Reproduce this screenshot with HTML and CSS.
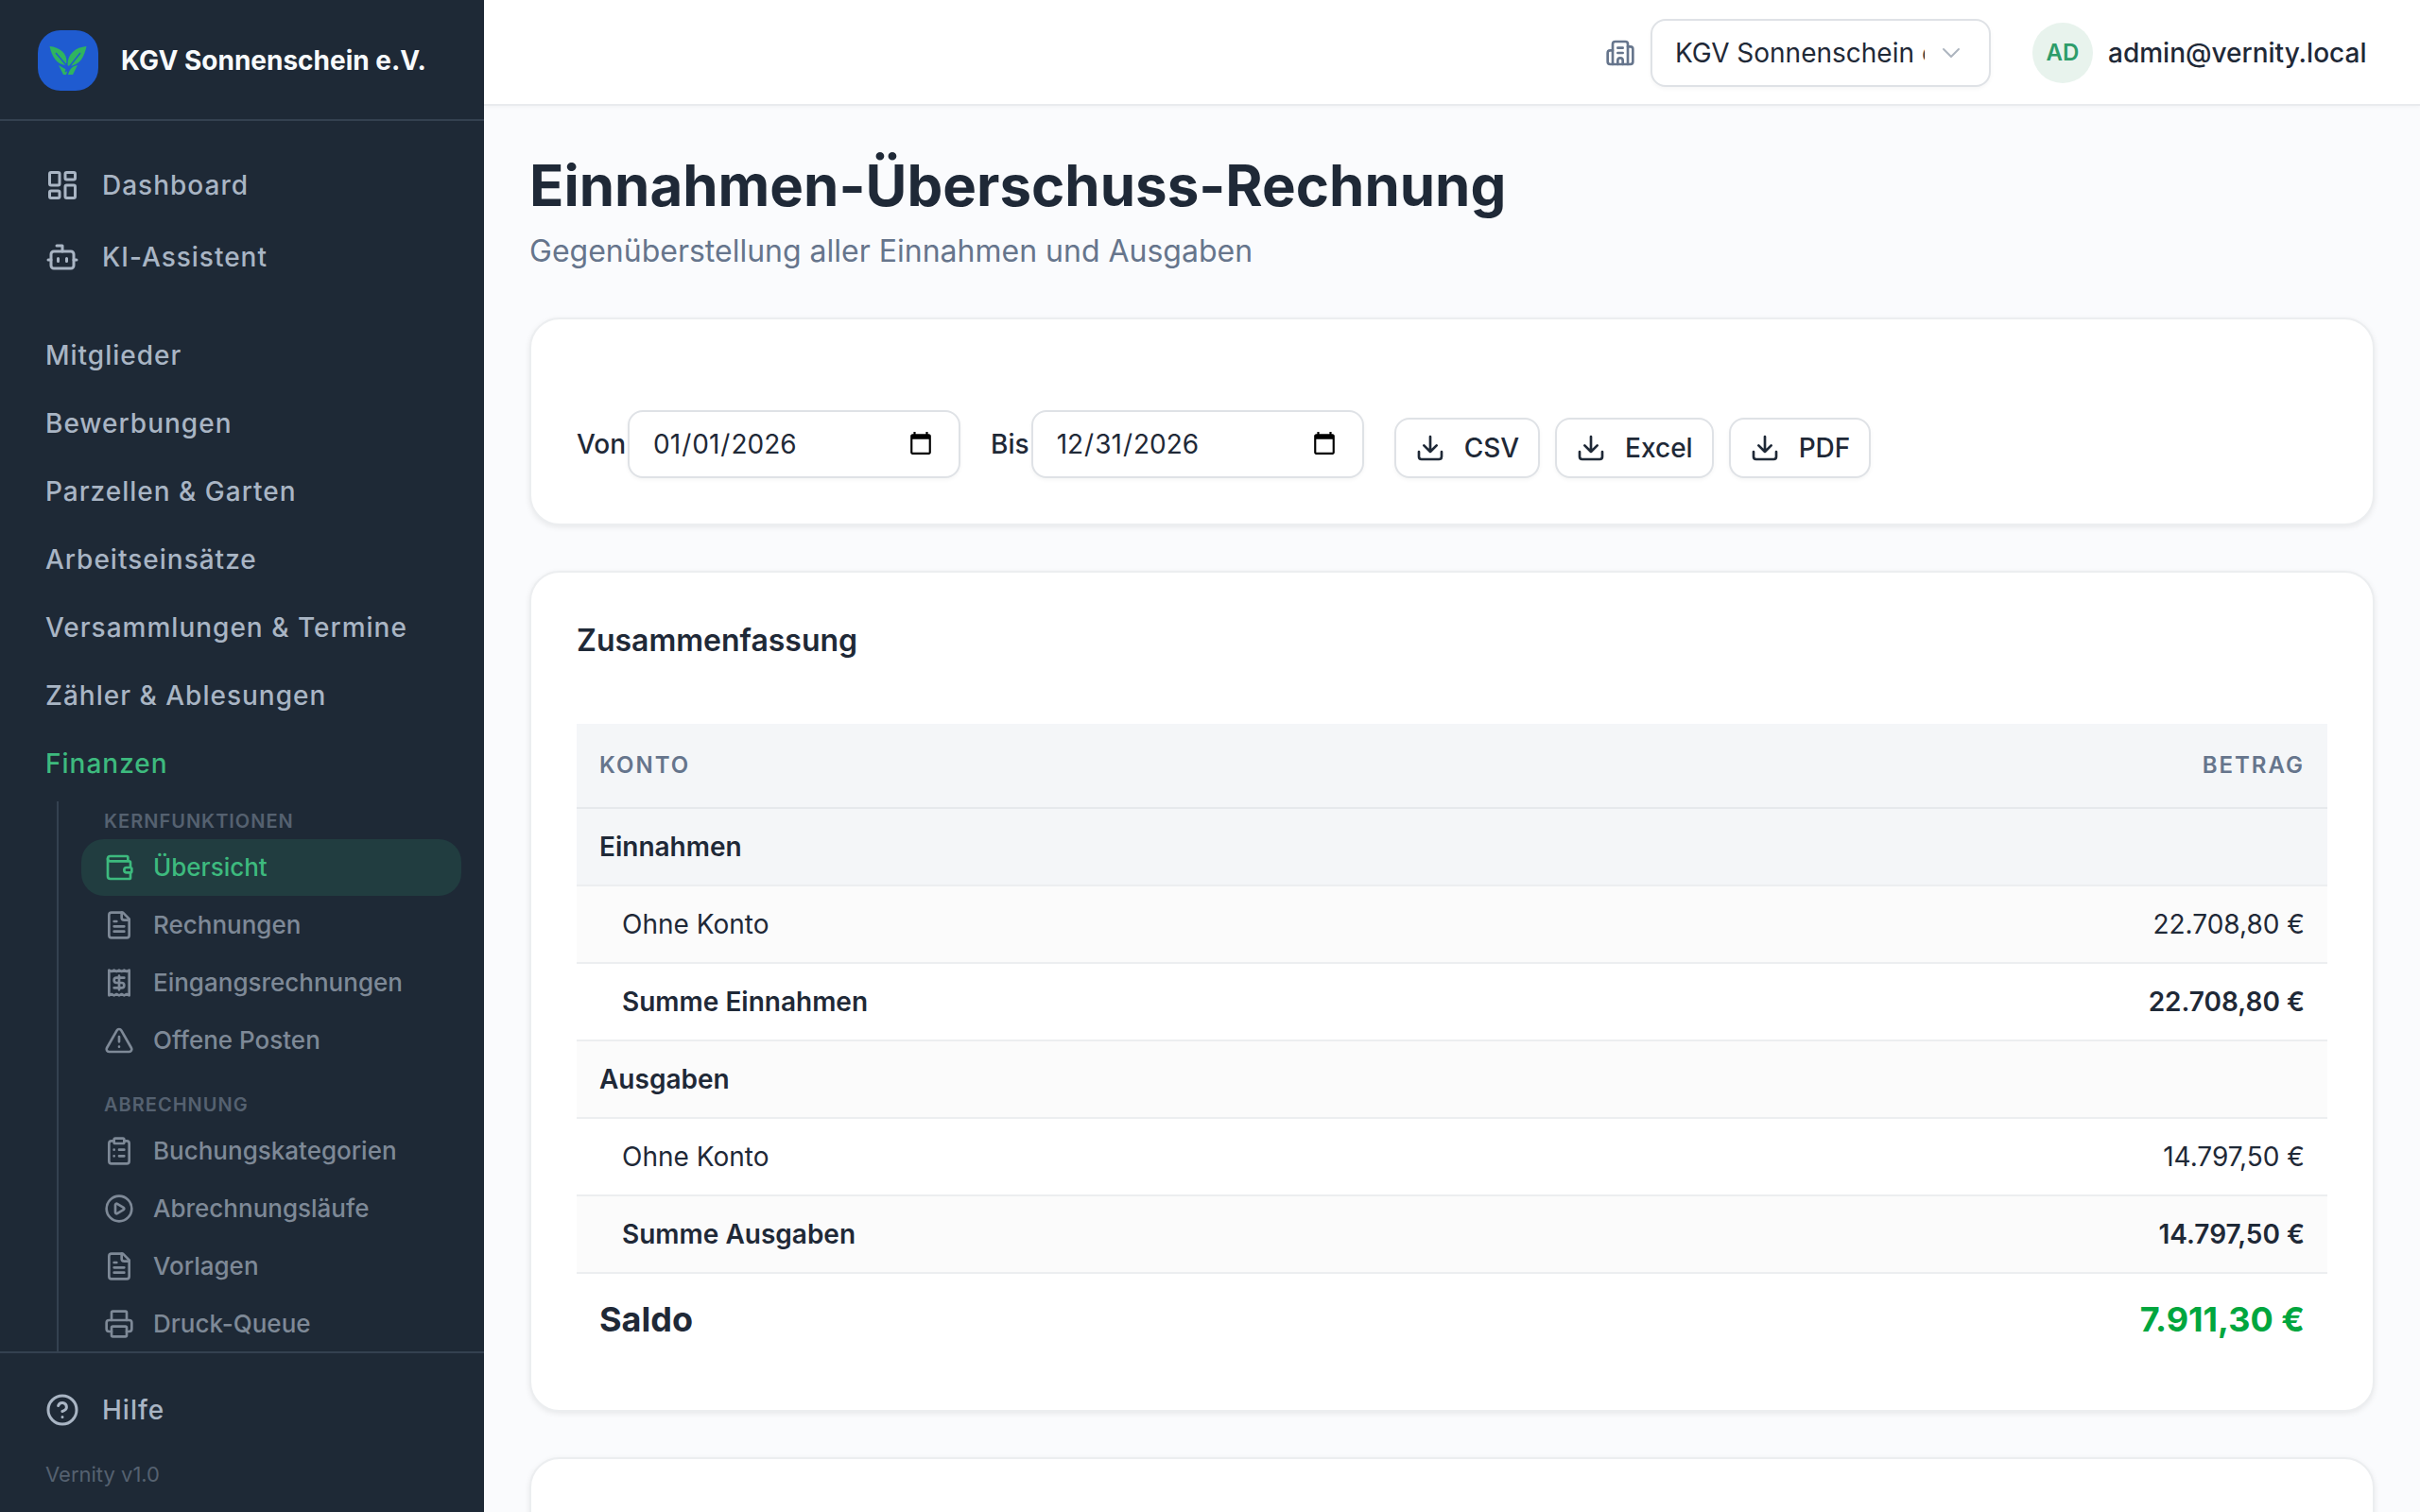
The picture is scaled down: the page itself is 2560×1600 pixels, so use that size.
FILE: index.html
```
<!DOCTYPE html>
<html lang="de">
<head>
  <meta charset="UTF-8" />
  <meta name="viewport" content="width=device-width, initial-scale=1" />
  <title>Einnahmen-Überschuss-Rechnung</title>
  <link rel="stylesheet" href="styles.css">
</head>
<body>

  <!-- Icon sprite -->
  <svg class="sprite" aria-hidden="true">
    <symbol id="i-dashboard" viewBox="0 0 24 24"><rect x="3" y="3" width="7" height="9" rx="1"/><rect x="14" y="3" width="7" height="5" rx="1"/><rect x="14" y="12" width="7" height="9" rx="1"/><rect x="3" y="16" width="7" height="5" rx="1"/></symbol>
    <symbol id="i-bot" viewBox="0 0 24 24"><path d="M12 8V4H8"/><rect x="4" y="8" width="16" height="12" rx="2"/><path d="M2 14h2M20 14h2M15 13v2M9 13v2"/></symbol>
    <symbol id="i-wallet" viewBox="0 0 24 24"><path d="M19 7V4a1 1 0 0 0-1-1H5a2 2 0 0 0 0 4h15a1 1 0 0 1 1 1v4h-3a2 2 0 0 0 0 4h3a1 1 0 0 0 1-1v-2a1 1 0 0 0-1-1"/><path d="M3 5v14a2 2 0 0 0 2 2h15a1 1 0 0 0 1-1v-4"/></symbol>
    <symbol id="i-file" viewBox="0 0 24 24"><path d="M15 2H6a2 2 0 0 0-2 2v16a2 2 0 0 0 2 2h12a2 2 0 0 0 2-2V7Z"/><path d="M14 2v4a2 2 0 0 0 2 2h4M10 9H8M16 13H8M16 17H8"/></symbol>
    <symbol id="i-receipt" viewBox="0 0 24 24"><path d="M4 2v20l2-1 2 1 2-1 2 1 2-1 2 1 2-1 2 1V2l-2 1-2-1-2 1-2-1-2 1-2-1-2 1Z"/><path d="M16 8h-6a2 2 0 1 0 0 4h4a2 2 0 1 1 0 4H8M12 17.5v-11"/></symbol>
    <symbol id="i-alert" viewBox="0 0 24 24"><path d="m21.73 18-8-14a2 2 0 0 0-3.48 0l-8 14A2 2 0 0 0 4 21h16a2 2 0 0 0 1.730-3M12 9v4M12 17h.01"/></symbol>
    <symbol id="i-clipboard" viewBox="0 0 24 24"><rect x="8" y="2" width="8" height="4" rx="1"/><path d="M16 4h2a2 2 0 0 1 2 2v14a2 2 0 0 1-2 2H6a2 2 0 0 1-2-2V6a2 2 0 0 1 2-2h2M12 11h4M12 16h4M8 11h.01M8 16h.01"/></symbol>
    <symbol id="i-play" viewBox="0 0 24 24"><circle cx="12" cy="12" r="10"/><path d="M9 9a1 1 0 0 1 1.5-.86l5 3a1 1 0 0 1 0 1.720l-5 3A1 1 0 0 1 9 15Z"/></symbol>
    <symbol id="i-printer" viewBox="0 0 24 24"><path d="M6 18H4a2 2 0 0 1-2-2v-5a2 2 0 0 1 2-2h16a2 2 0 0 1 2 2v5a2 2 0 0 1-2 2h-2"/><path d="M6 9V3a1 1 0 0 1 1-1h10a1 1 0 0 1 1 1v6"/><rect x="6" y="14" width="12" height="8" rx="1"/></symbol>
    <symbol id="i-help" viewBox="0 0 24 24"><circle cx="12" cy="12" r="10"/><path d="M9.09 9a3 3 0 0 1 5.83 1c0 2-3 3-3 3M12 17h.01"/></symbol>
    <symbol id="i-building" viewBox="0 0 24 24"><path d="M10 12h4M10 8h4M14 21v-3a2 2 0 0 0-4 0v3"/><path d="M6 10H4a2 2 0 0 0-2 2v7a2 2 0 0 0 2 2h16a2 2 0 0 0 2-2V9a2 2 0 0 0-2-2h-2"/><path d="M6 21V5a2 2 0 0 1 2-2h8a2 2 0 0 1 2 2v16"/></symbol>
    <symbol id="i-download" viewBox="0 0 24 24"><path d="M12 15V3M21 15v4a2 2 0 0 1-2 2H5a2 2 0 0 1-2-2v-4M7 10l5 5 5-5"/></symbol>
    <symbol id="i-chevron" viewBox="0 0 24 24"><path d="m4 8 8 8 8-8"/></symbol>
  </svg>

  <div class="layout">
    <aside class="sidebar">
      <div class="brand">
        <svg class="logo" viewBox="0 0 64 64" aria-hidden="true">
          <rect width="64" height="64" rx="24" fill="#1f5bd0"/>
          <g fill="#2fb45f">
            <path d="M12.500 17C23 18 31 24 30.500 34L29 37C20 36 15 28 12.500 17Z"/>
            <path d="M51.500 17C40 18 31 25 31.500 37L33 38C45 37 49 28 51.500 17Z"/>
            <path d="M22 37L29 41 31 44 30 47H27Z"/>
            <path d="M42 37C37 38 34 40 32 47H37Z"/>
          </g>
          <path d="M19 24L31 38M45 24L29 44" fill="none" stroke="#1f5bd0" stroke-width="1.5"/>
        </svg>
        <span class="brand-name">KGV Sonnenschein e.V.</span>
      </div>

      <nav class="nav">
        <a class="nav-link" href="#"><svg class="icon icon-lg"><use href="#i-dashboard"/></svg>Dashboard</a>
        <a class="nav-link" href="#"><svg class="icon icon-lg"><use href="#i-bot"/></svg>KI-Assistent</a>

        <div class="nav-groups">
          <a class="nav-group" href="#">Mitglieder</a>
          <a class="nav-group" href="#">Bewerbungen</a>
          <a class="nav-group" href="#">Parzellen &amp; Garten</a>
          <a class="nav-group" href="#">Arbeitseinsätze</a>
          <a class="nav-group" href="#">Versammlungen &amp; Termine</a>
          <a class="nav-group" href="#">Zähler &amp; Ablesungen</a>
          <a class="nav-group active" href="#">Finanzen</a>
        </div>

        <div class="subnav">
          <div class="subnav-title">Kernfunktionen</div>
          <a class="subnav-link active" href="#"><svg class="icon"><use href="#i-wallet"/></svg>Übersicht</a>
          <a class="subnav-link" href="#"><svg class="icon"><use href="#i-file"/></svg>Rechnungen</a>
          <a class="subnav-link" href="#"><svg class="icon"><use href="#i-receipt"/></svg>Eingangsrechnungen</a>
          <a class="subnav-link" href="#"><svg class="icon"><use href="#i-alert"/></svg>Offene Posten</a>
          <div class="subnav-title">Abrechnung</div>
          <a class="subnav-link" href="#"><svg class="icon"><use href="#i-clipboard"/></svg>Buchungskategorien</a>
          <a class="subnav-link" href="#"><svg class="icon"><use href="#i-play"/></svg>Abrechnungsläufe</a>
          <a class="subnav-link" href="#"><svg class="icon"><use href="#i-file"/></svg>Vorlagen</a>
          <a class="subnav-link" href="#"><svg class="icon"><use href="#i-printer"/></svg>Druck-Queue</a>
        </div>
      </nav>

      <div class="sidebar-footer">
        <a class="nav-link help" href="#"><svg class="icon icon-lg"><use href="#i-help"/></svg>Hilfe</a>
        <div class="version">Vernity v1.0</div>
      </div>
    </aside>

    <div class="page">
      <header class="topbar">
        <div class="tenant">
          <svg class="icon"><use href="#i-building"/></svg>
          <div class="select-wrap">
            <select class="field" aria-label="Verein">
              <option>KGV Sonnenschein e.V.</option>
            </select>
            <svg class="icon chevron"><use href="#i-chevron"/></svg>
          </div>
        </div>
        <div class="user">
          <span class="avatar">AD</span>
          <span>admin@vernity.local</span>
        </div>
      </header>

      <main class="content">
        <div class="page-head">
          <h1>Einnahmen-Überschuss-Rechnung</h1>
          <p>Gegenüberstellung aller Einnahmen und Ausgaben</p>
        </div>

        <section class="card filter-card">
          <form class="filters">
            <div class="date">
              <label for="from">Von</label>
              <input class="field" type="date" id="from" value="2026-01-01">
            </div>
            <div class="date">
              <label for="to">Bis</label>
              <input class="field" type="date" id="to" value="2026-12-31">
            </div>
            <div class="exports">
              <button class="btn" type="button"><svg class="icon"><use href="#i-download"/></svg>CSV</button>
              <button class="btn" type="button"><svg class="icon"><use href="#i-download"/></svg>Excel</button>
              <button class="btn" type="button"><svg class="icon"><use href="#i-download"/></svg>PDF</button>
            </div>
          </form>
        </section>

        <section class="card">
          <h2>Zusammenfassung</h2>
          <table>
            <thead>
              <tr><th>Konto</th><th class="amount">Betrag</th></tr>
            </thead>
            <tbody>
              <tr class="section hovered"><td>Einnahmen</td><td></td></tr>
              <tr class="entry"><td>Ohne Konto</td><td class="amount">22.708,80 €</td></tr>
              <tr class="entry sum"><td>Summe Einnahmen</td><td class="amount">22.708,80 €</td></tr>
              <tr class="section"><td>Ausgaben</td><td></td></tr>
              <tr class="entry"><td>Ohne Konto</td><td class="amount">14.797,50 €</td></tr>
              <tr class="entry sum"><td>Summe Ausgaben</td><td class="amount">14.797,50 €</td></tr>
            </tbody>
            <tfoot>
              <tr><td>Saldo</td><td class="amount positive">7.911,30 €</td></tr>
            </tfoot>
          </table>
        </section>

        <section class="card next-card"></section>
      </main>
    </div>
  </div>

</body>
</html>
```
FILE: styles.css
```
* {
  box-sizing: border-box;
}
body {
  margin: 0;
  font-family: Inter, sans-serif;
  font-size: 28px;
  line-height: 40px;
  font-optical-sizing: none;
  color: #1f2937;
  background: #fafbfd;
}
a {
  color: inherit;
  text-decoration: none;
}
.sprite {
  display: none;
}
.icon {
  width: 32px;
  height: 32px;
  flex: none;
  fill: none;
  stroke: currentColor;
  stroke-width: 2;
  stroke-linecap: round;
  stroke-linejoin: round;
}
.icon-lg {
  width: 36px;
  height: 36px;
}
.layout {
  display: flex;
  height: 100vh;
  overflow: hidden;
}

/* Sidebar */
.sidebar {
  display: flex;
  flex-direction: column;
  flex: none;
  width: 512px;
  color: #a9b5c4;
  background: #1e2936;
}
.brand {
  display: flex;
  align-items: center;
  gap: 24px;
  padding: 32px 40px 30px;
  border-bottom: 2px solid #344150;
}
.logo {
  width: 64px;
  height: 64px;
  flex: none;
}
.brand-name {
  color: #f8fafc;
  font-weight: 700;
  white-space: nowrap;
}
.nav {
  flex: 1;
  min-height: 0;
  padding-top: 32px;
  overflow: hidden;
  font-weight: 500;
}
.nav-link {
  display: flex;
  align-items: center;
  gap: 24px;
  height: 72px;
  margin-bottom: 4px;
  padding: 0 48px;
  letter-spacing: 1px;
}
.nav-groups {
  padding-top: 28px;
}
.nav-group {
  display: block;
  padding: 16px 48px;
  letter-spacing: 1px;
}
.nav-group.active {
  color: #3dba7e;
}
.subnav {
  display: flex;
  flex-direction: column;
  gap: 1px;
  margin: 4px 24px 0 60px;
  padding-left: 24px;
  border-left: 2px solid #344150;
  color: #7e8997;
}
.subnav-title {
  padding: 9px 24px 6px;
  color: #556170;
  font-size: 20px;
  line-height: 24px;
  font-weight: 600;
  letter-spacing: 1px;
  text-transform: uppercase;
}
.subnav-link + .subnav-title {
  margin-top: 16px;
}
.subnav-link {
  display: flex;
  align-items: center;
  gap: 20px;
  height: 60px;
  flex: none;
  padding: 0 24px;
  border-radius: 24px;
  font-size: 26px;
}
.subnav-link.active {
  color: #3dba7e;
  background: #213d40;
}
.sidebar-footer {
  padding: 24px 0;
  border-top: 2px solid #344150;
}
.help {
  font-weight: 500;
}
.version {
  padding: 12px 48px 0;
  color: #556170;
  font-size: 22px;
  line-height: 32px;
}

/* Top bar */
.page {
  flex: 1;
  min-width: 0;
  display: flex;
  flex-direction: column;
}
.topbar {
  display: flex;
  flex: none;
  align-items: center;
  justify-content: flex-end;
  gap: 44px;
  height: 112px;
  padding: 2px 44px 0 0;
  background: #fff;
  border-bottom: 2px solid #e9ebee;
  box-shadow: 0 2px 4px rgba(0, 0, 0, 0.03);
}
.tenant {
  display: flex;
  align-items: center;
  gap: 16px;
  color: #66758c;
}
.field {
  height: 72px;
  padding: 0 24px;
  border: 2px solid #dfe2e6;
  border-radius: 16px;
  background: #fff;
  box-shadow: 0 2px 4px rgba(0, 0, 0, 0.04);
  color: #1f2937;
  font: inherit;
}
.select-wrap {
  position: relative;
}
.select-wrap .field {
  display: block;
  width: 360px;
  padding-right: 68px;
  appearance: none;
}
.chevron {
  position: absolute;
  top: 24px;
  right: 30px;
  width: 24px;
  height: 24px;
  color: #adb5bf;
}
.user {
  display: flex;
  align-items: center;
  gap: 16px;
  min-width: 366px;
  font-weight: 500;
}
.avatar {
  display: flex;
  align-items: center;
  justify-content: center;
  width: 64px;
  height: 64px;
  border-radius: 50%;
  color: #2d9c69;
  background: #e8f3ed;
  font-size: 24px;
  font-weight: 600;
}

/* Content */
.content {
  display: flex;
  flex: 1;
  flex-direction: column;
  gap: 48px;
  min-height: 0;
  padding: 48px;
  overflow: hidden;
}
h1 {
  margin: 0;
  font-size: 60px;
  line-height: 72px;
  font-weight: 700;
}
.page-head p {
  margin: 12px 0 0;
  color: #66758c;
  font-size: 32px;
  line-height: 44px;
}
.card {
  flex: none;
  padding: 48px;
  border: 2px solid #eceef0;
  border-radius: 32px;
  background: #fff;
  box-shadow: 0 2px 6px rgba(0, 0, 0, 0.08);
}
.filter-card {
  padding-top: 96px;
}
.filters {
  display: flex;
  align-items: flex-end;
  gap: 32px;
}
.date {
  display: flex;
  align-items: center;
}
.date label {
  padding-right: 2px;
  font-weight: 500;
}
.date .field {
  width: 352px;
}
.exports {
  display: flex;
  gap: 16px;
}
.btn {
  display: flex;
  align-items: center;
  gap: 20px;
  height: 64px;
  padding: 0 20px;
  border: 2px solid #dfe2e6;
  border-radius: 16px;
  background: #fff;
  box-shadow: 0 2px 4px rgba(0, 0, 0, 0.04);
  color: inherit;
  font: inherit;
  font-weight: 500;
}
h2 {
  margin: 0 0 64px;
  font-size: 32px;
  line-height: 48px;
  font-weight: 600;
}
table {
  width: 100%;
  border-collapse: separate;
  border-spacing: 0;
}
th, td {
  height: 82px;
  padding: 0 24px;
  border-bottom: 2px solid #eceef0;
  text-align: left;
}
th {
  height: 90px;
  border-bottom-color: #e6e9ec;
  color: #66758c;
  background: #f4f6f8;
  font-size: 24px;
  font-weight: 600;
  letter-spacing: 2px;
  text-transform: uppercase;
}
tbody tr:nth-child(even) {
  background: #fbfbfb;
}
tbody tr.hovered {
  background: #f4f6f8;
}
.section, .sum {
  font-weight: 600;
}
.entry td:first-child {
  padding-left: 48px;
}
tfoot td {
  height: 96px;
  border-bottom: none;
  font-size: 36px;
  font-weight: 700;
}
.amount {
  text-align: right;
}
.positive {
  color: #00a63e;
}
.next-card {
  min-height: 200px;
}
```
